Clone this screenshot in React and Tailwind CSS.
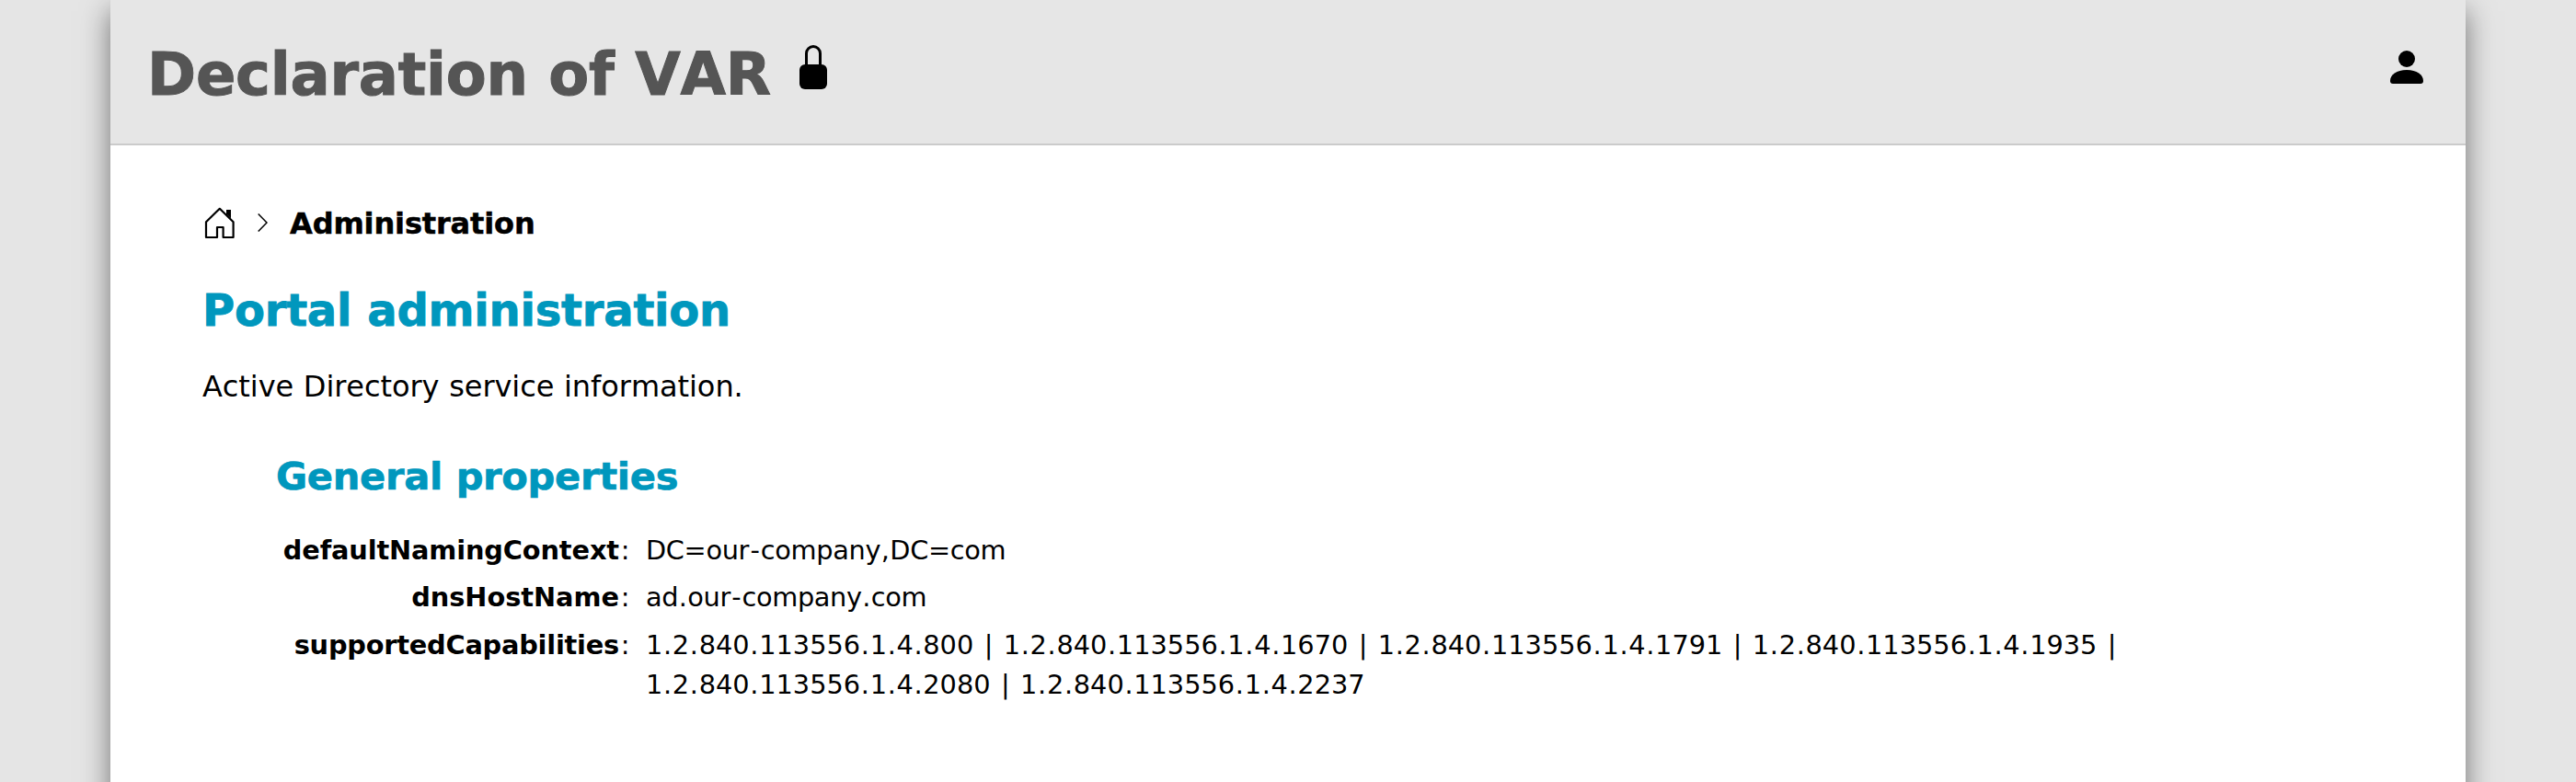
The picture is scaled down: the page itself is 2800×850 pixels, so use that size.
import React from "react";

const PAD = {
  ".": "px-[0.023em]",
  ",": "px-[0.023em]",
  "-": "px-[0.047em]",
  ":": "px-[0.058em]",
  "|": "px-[0.058em]",
};

// Gives punctuation marks a little more side bearing.
function Spaced({ children }) {
  return children.split(/([.,:|-])/).map((part, i) =>
    PAD[part] ? (
      <span key={i} className={PAD[part]}>
        {part}
      </span>
    ) : (
      part
    )
  );
}

function LockIcon() {
  return (
    <svg className="mt-[49px] ml-[29px] h-[48px] w-[30px]" viewBox="0 0 30 48">
      <path d="M7.5 23V9a7.5 7.5 0 0 1 15 0v14" fill="none" stroke="#000" strokeWidth="3" />
      <rect y="21" width="30" height="27" rx="6" />
    </svg>
  );
}

function UserIcon() {
  return (
    <svg className="mt-[55px] mr-[46px] ml-auto h-[36px] w-[36px]" viewBox="0 0 36 36">
      <circle cx="18" cy="9" r="9" />
      <path d="M3 36Q0 36 0 33C0 26 7 21 18 21s18 5 18 12q0 3-3 3z" />
    </svg>
  );
}

function HomeIcon() {
  return (
    <svg
      className="h-[36px] w-[34px]"
      viewBox="0 0 34 36"
      fill="none"
      stroke="#000"
      strokeWidth="2.2"
      strokeLinejoin="round"
    >
      <path d="M2 16.2 16.8 1.8l14.8 14.4V33H20.6V22h-6.6v11H2z" />
      <path d="M24 3h5v9.5l-5-5z" fill="#000" stroke="none" />
    </svg>
  );
}

function Chevron() {
  return (
    <svg className="mb-[2px] h-[20px] w-[11px]" viewBox="0 0 11 20" fill="none" stroke="#000" strokeWidth="1.5">
      <path d="M.7.5 10 10 .7 19.5" />
    </svg>
  );
}

const properties = [
  {
    name: "defaultNamingContext",
    tracking: "tracking-[-0.13px]",
    valueTracking: "tracking-[-0.34px]",
    lines: ["DC=our-company,DC=com"],
  },
  {
    name: "dnsHostName",
    tracking: "tracking-[-0.03px]",
    valueTracking: "tracking-[-0.38px]",
    lines: ["ad.our-company.com"],
  },
  {
    name: "supportedCapabilities",
    tracking: "tracking-[-0.22px]",
    valueTracking: "tracking-[0.01px]",
    lines: [
      "1.2.840.113556.1.4.800 | 1.2.840.113556.1.4.1670 | 1.2.840.113556.1.4.1791 | 1.2.840.113556.1.4.1935 |",
      "1.2.840.113556.1.4.2080 | 1.2.840.113556.1.4.2237",
    ],
  },
];

export default function App() {
  return (
    <div className="h-[850px] overflow-hidden bg-[#e5e5e5] px-[120px] font-['DejaVu_Sans','Verdana',sans-serif] text-black [font-kerning:none] [word-spacing:0.034em]">
      <div className="h-[900px] bg-white shadow-[0_12px_29px_rgba(0,0,0,0.5)]">
        <header className="flex h-[158px] items-start border-b-2 border-[#cbcbcb] bg-[#e6e6e6] pl-[40px]">
          <h1 className="mt-[41px] w-[680px] text-[64px] leading-[80px] font-bold tracking-[-0.24px] whitespace-nowrap text-[#555] [-webkit-text-stroke:1px_#555]">
            Declaration of VAR
          </h1>
          <LockIcon />
          <UserIcon />
        </header>
        <main className="pl-[100px]">
          <nav className="mt-[65px] flex h-[40px] items-center pl-[2px]">
            <HomeIcon />
            <span className="ml-[24px] flex">
              <Chevron />
            </span>
            <span className="ml-[24px] text-[32px] leading-[40px] font-bold tracking-[-0.14px] [-webkit-text-stroke:0.5px_#000]">
              Administration
            </span>
          </nav>
          <h2 className="mt-[44px] text-[48px] leading-[60px] font-bold tracking-[-0.23px] text-[#0097bd] [-webkit-text-stroke:0.8px_#0097bd]">
            Portal administration
          </h2>
          <p className="mt-[33px] text-[32px] leading-[40px] tracking-[-0.06px]">
            Active Directory service information.
          </p>
          <section className="pl-[80px]">
            <h3 className="mt-[50px] text-[41.6px] leading-[56px] font-bold tracking-[-0.3px] text-[#0097bd] [-webkit-text-stroke:0.7px_#0097bd]">
              General properties
            </h3>
            <dl className="mt-[31px] grid grid-cols-[386px_1fr] gap-x-[16px] gap-y-[8.2px] text-[28.8px] leading-[43.2px]">
              {properties.map((p) => (
                <React.Fragment key={p.name}>
                  <dt className="text-right">
                    <b className={p.tracking}>{p.name}</b>
                    <Spaced>:</Spaced>
                  </dt>
                  <dd className={p.valueTracking}>
                    {p.lines.map((line) => (
                      <div key={line} className="whitespace-nowrap">
                        <Spaced>{line}</Spaced>
                      </div>
                    ))}
                  </dd>
                </React.Fragment>
              ))}
            </dl>
          </section>
        </main>
      </div>
    </div>
  );
}
